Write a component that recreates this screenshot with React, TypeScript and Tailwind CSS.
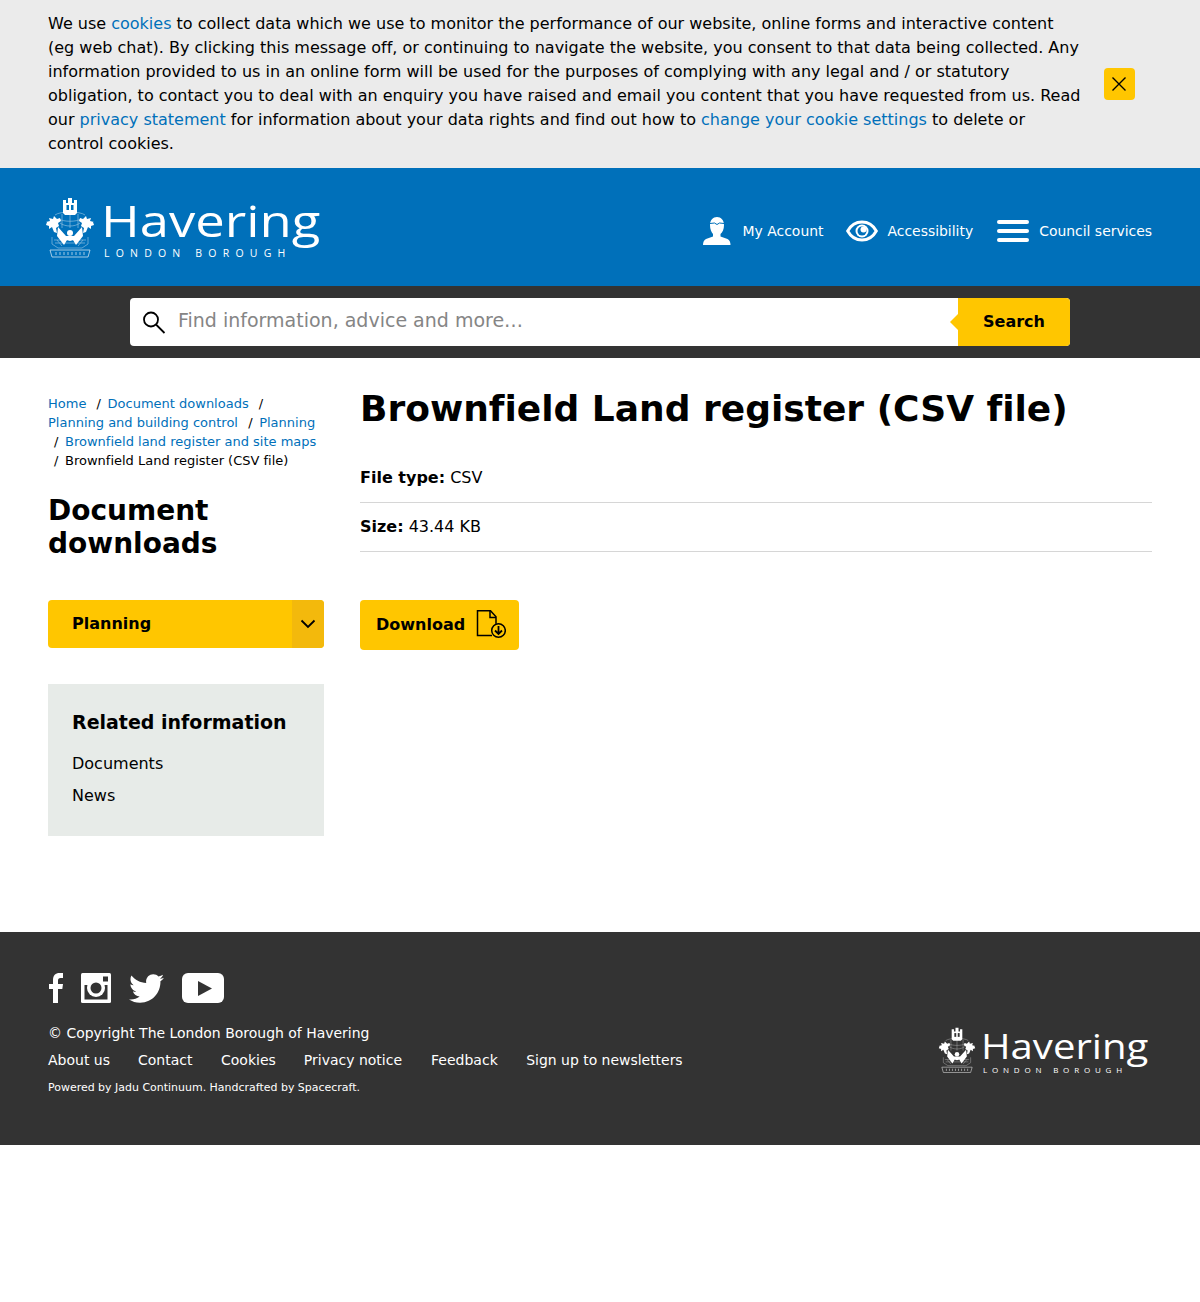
import React from "react";
import { FaTwitter } from "react-icons/fa";

const Crest = ({ className }: { className?: string }) => (
  <svg viewBox="0 0 50 62" className={className} fill="white" aria-hidden="true">
    <path d="M18 16V3h3v3h2V1h4v5h2V3h3v13l-2 2h-10z" />
    <rect x="21.500" y="8" width="2.500" height="5" fill="currentColor" />
    <rect x="26" y="8" width="2.500" height="5" fill="currentColor" />
    <path d="M1 25l4-1-1-3 4 1 1-3 3 3 3-1 1 3-3 2 1 3-3 2 1 5-3-1-2-5-3 2 0-3-3-1 1-3z" />
    <path d="M49 25l-4-1 1-3-4 1-1-3-3 3-3-1-1 3 3 2-1 3 3 2-1 5 3-1 2-5 3 2 0-3 3-1-1-3z" />
    <path d="M13 30l8 9 4 0 4 0 8-9 1 9-7 9-3-5-3 1-3-1-3 5-7-9z" />
    <circle cx="25" cy="36" r="3" />
    <g fill="none" stroke="white" strokeWidth=".7" opacity=".55">
      <path d="M10 18c5-4 25-4 30 0M14 22c5 3 17 3 22 0M15 26c5 4 15 4 20 0M17 17v14M33 17v14M25 17v14" />
      <path d="M7 40v7l6 4h24l6-4v-7M12 43l5 6M38 43l-5 6M10 46h30M9 43h32" />
    </g>
    <g fill="none" stroke="white" strokeWidth=".8" opacity=".8">
      <path d="M5 53h40l-2 7H7z" />
      <path d="M11 55v3M15 55v3M19 55v3M23 55v3M27 55v3M31 55v3M35 55v3M39 55v3" />
    </g>
  </svg>
);

const Logo = ({ small }: { small?: boolean }) =>
  small ? (
    <div className="flex items-start">
      <Crest className="w-[38px] h-[47px] text-[#333]" />
      <div className="ml-[5px] w-[171px] flex flex-col [font-family:'Open_Sans',sans-serif] text-white">
        <span className="block origin-left scale-x-[1.18] text-[34px] leading-[38px] font-normal whitespace-nowrap">Havering</span>
        <span className="text-[8px] leading-[8px] mt-[1px] tracking-[4.8px] pl-[2px] whitespace-nowrap">LONDON BOROUGH</span>
      </div>
    </div>
  ) : (
    <div className="flex items-start">
      <Crest className="w-[50px] h-[62px] text-[#0070ba]" />
      <div className="ml-[6px] w-[221px] flex flex-col [font-family:'Open_Sans',sans-serif] text-white">
        <span className="block origin-left scale-x-[1.195] text-[44px] leading-[50px] font-normal whitespace-nowrap mt-[-2px]">Havering</span>
        <span className="text-[10.500px] leading-[12px] mt-[2px] tracking-[6.200px] pl-[3px] whitespace-nowrap">LONDON BOROUGH</span>
      </div>
    </div>
  );

const A = ({ children }: { children: React.ReactNode }) => (
  <a href="#" className="text-[#0070ba]">{children}</a>
);

const Sep = () => <span className="pr-[2.500px]">/</span>;

export default function App() {
  return (
    <div className="bg-white text-black min-h-[1302px] [font-family:'DejaVu_Sans',sans-serif] [font-variant-ligatures:none]">
      <div className="bg-[#ebebeb] h-[168px] pl-12 pr-[65px] pt-3 flex items-center justify-between">
        <p className="text-base leading-6 w-[1035px] -mt-3">
          We use <A>cookies</A> to collect data which we use to monitor the performance of our website, online forms and interactive content (eg web chat). By clicking this message off, or continuing to navigate the website, you consent to that data being collected. Any information provided to us in an online form will be used for the purposes of complying with any legal and / or statutory obligation, to contact you to deal with an enquiry you have raised and email you content that you have requested from us. Read our <A>privacy statement</A> for information about your data rights and find out how to <A>change your cookie settings</A> to delete or control cookies.
        </p>
        <button className="w-[31px] h-8 rounded bg-[#ffc600] flex items-center justify-center -mt-3 shrink-0">
          <svg viewBox="0 0 16 16" className="w-4 h-4 -ml-px" stroke="black" strokeWidth="1.400" fill="none">
            <path d="M1.500 1.500l13 13M14.500 1.500l-13 13" />
          </svg>
        </button>
      </div>

      <header className="bg-[#0070ba] h-[118px] pl-[45px] pr-12 flex items-start justify-between">
        <div className="pt-[29px]"><Logo /></div>
        <nav className="flex items-center text-white text-[13.930px] mt-[47px] h-8">
          <a className="flex items-center gap-[12px] mr-[22px]">
            <svg viewBox="0 0 28 28" className="w-7 h-7" fill="white">
              <path d="M7 8C7 3 10 0 14 0s7 3 7 8c0 4-1.500 7.500-3.500 9v2.500l7 2.500c2 1 3 3 3 6H0c0-3 1-5 3-6l7-2.500V17C8.500 15.500 7 12 7 8z" />
              <path d="M7 6.500l4.500-.5 2.500 1.500L16.500 6l4.500.5" fill="none" stroke="#0070ba" strokeWidth="1" />
            </svg>
            <span>My Account</span>
          </a>
          <a className="flex items-center gap-[10px] mr-[24px]">
            <svg viewBox="0 0 32 22" className="w-8 h-[22px]" fill="none">
              <path d="M1.700 11C5 5 10 2 16 2s11 3 14.300 9C27 17 22 20 16 20S5 17 1.700 11z" stroke="white" strokeWidth="3" />
              <circle cx="16" cy="11" r="6.500" fill="white" />
              <circle cx="16" cy="11" r="4.500" fill="#0070ba" />
              <circle cx="17.500" cy="9.500" r="3" fill="white" />
            </svg>
            <span>Accessibility</span>
          </a>
          <a className="flex items-center gap-[10px]">
            <span className="flex flex-col gap-[5px] w-8">
              <span className="h-1 rounded-sm bg-white" />
              <span className="h-1 rounded-sm bg-white" />
              <span className="h-1 rounded-sm bg-white" />
            </span>
            <span>Council services</span>
          </a>
        </nav>
      </header>

      <div className="bg-[#333] h-[72px] flex items-center justify-center">
        <div className="w-[940px] h-12 bg-white rounded flex items-center relative">
          <svg viewBox="0 0 24 24" className="w-6 h-6 ml-3 shrink-0" fill="none" stroke="black" strokeWidth="1.800">
            <circle cx="9" cy="9.500" r="7" />
            <path d="M14 14.500l8.500 8.500" />
          </svg>
          <span className="ml-3 text-[19px] leading-6 text-[#858585] -mt-1">Find information, advice and more…</span>
          <div className="absolute right-0 top-0 w-28 h-12 bg-[#ffc600] rounded-r flex items-center justify-center font-bold text-base">
            <span className="absolute left-[-8px] top-[16px] w-0 h-0 border-y-8 border-y-transparent border-r-8 border-r-[#ffc600]" />
            Search
          </div>
        </div>
      </div>

      <main className="h-[574px] px-12 flex gap-9">
        <aside className="w-[276px] shrink-0 pt-[36px]">
          <ul className="text-[13px] leading-[19px]">
            <li className="inline"><A>Home</A></li>{" "}
            <li className="inline pl-1.5"><Sep /> <A>Document downloads</A></li>{" "}
            <li className="inline pl-1.5"><Sep /> <A>Planning and building control</A></li>{" "}
            <li className="inline pl-1.5"><Sep /> <A>Planning</A></li>{" "}
            <li className="inline pl-1.5"><Sep /> <A>Brownfield land register and site maps</A></li>{" "}
            <li className="inline pl-1.5"><Sep /> Brownfield Land register (CSV file)</li>
          </ul>
          <h2 className="text-[28px] leading-[33px] font-bold mt-[24px]">Document downloads</h2>
          <div className="mt-[40px] h-12 rounded bg-[#ffc600] flex items-center justify-between overflow-hidden">
            <span className="pl-6 font-bold text-base leading-6 -mt-px">Planning</span>
            <span className="w-8 h-12 bg-[#f3b90c] flex items-center justify-center">
              <svg viewBox="0 0 16 10" className="w-4 h-[10px]" fill="none" stroke="black" strokeWidth="1.800"><path d="M1.500 1.500L8 8l6.500-6.500" /></svg>
            </span>
          </div>
          <div className="mt-9 h-[152px] bg-[#e7ebe8] px-6 pt-[26px]">
            <h3 className="text-[19px] leading-6 font-bold">Related information</h3>
            <p className="mt-[18px] text-base leading-6">Documents</p>
            <p className="mt-2 text-base leading-6">News</p>
          </div>
        </aside>
        <section className="flex-1 pt-[28px]">
          <h1 className="text-[36px] leading-[46px] font-bold">Brownfield Land register (CSV file)</h1>
          <div className="mt-[22px] h-[49px] border-b border-[#d6d6d6] text-base pt-[12px] leading-6"><b>File type:</b> CSV</div>
          <div className="h-[49px] border-b border-[#d6d6d6] text-base pt-[12px] leading-6"><b>Size:</b> 43.44 KB</div>
          <button className="mt-12 w-[159px] h-[50px] rounded bg-[#ffc600] flex items-center pl-4 gap-3 font-bold text-base">
            Download
            <svg viewBox="0 0 30 30" className="w-[30px] h-[30px] -ml-px" fill="none" stroke="black" strokeWidth="1.500">
              <path d="M16 25.500H1.500V.8h13l5.500 6v7" />
              <path d="M14 1v6.500h6" />
              <circle cx="22.500" cy="20.500" r="6.800" />
              <path d="M22.500 16v8M19 20.500l3.500 3.500 3.500-3.500" strokeWidth="1.800" />
            </svg>
          </button>
        </section>
      </main>

      <footer className="bg-[#333] h-[213px] px-12 pt-[41px] text-white flex justify-between">
        <div>
          <div className="flex items-center h-[30px]">
            <svg viewBox="0 0 14 30" className="w-[14px] h-[30px] ml-px" fill="white">
              <path d="M4 30V16H0v-5h4V7c0-4.500 2.500-7 6.500-7H14v5h-2.500C9.800 5 9 6 9 7.500V11h5l-.7 5H9v14z" />
            </svg>
            <svg viewBox="0 0 30 30" className="w-[30px] h-[30px] ml-[18px]">
              <rect width="30" height="30" rx="1.500" fill="white" />
              <path d="M3.500 12h23v14.500h-23z" fill="#333" />
              <circle cx="15" cy="15" r="9" fill="white" />
              <circle cx="15" cy="15" r="5.500" fill="#333" />
              <rect x="22" y="3.500" width="5" height="5" fill="#333" />
            </svg>
            <FaTwitter className="w-[35px] h-[35px] ml-[18px] shrink-0" />
            <svg viewBox="0 0 42 30" className="w-[42px] h-[30px] ml-[18px]">
              <rect width="42" height="30" rx="6" fill="white" />
              <path d="M16 8l14 7.500L16 23z" fill="#333" />
            </svg>
          </div>
          <p className="text-[13.980px] leading-5 mt-5">© Copyright The London Borough of Havering</p>
          <div className="flex text-sm leading-5 mt-[7px]">
            <span className="mr-7">About us</span>
            <span className="mr-[28.500px]">Contact</span>
            <span className="mr-[28px]">Cookies</span>
            <span className="mr-[29px]">Privacy notice</span>
            <span className="mr-[28.500px]">Feedback</span>
            <span className="[font-size:13.950px]">Sign up to newsletters</span>
          </div>
          <p className="text-[10.980px] leading-4 mt-[10px]">Powered by Jadu Continuum. Handcrafted by Spacecraft.</p>
        </div>
        <div className="pt-[54px]"><Logo small /></div>
      </footer>
    </div>
  );
}
